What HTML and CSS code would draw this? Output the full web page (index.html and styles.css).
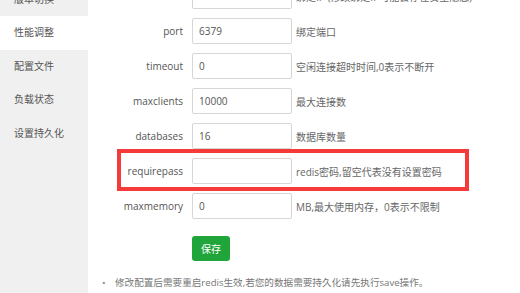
FILE: index.html
```html
<!DOCTYPE html>
<html>
<head>
    <meta charset="UTF-8">
    <title>Redis 性能调整</title>
    <link rel="stylesheet" href="styles.css">
</head>
<body>
    <div class="wrap">
        <div class="side">
            <div class="side-item">版本切换</div>
            <div class="side-item active">性能调整</div>
            <div class="side-item">配置文件</div>
            <div class="side-item">负载状态</div>
            <div class="side-item">设置持久化</div>
        </div>
        <div class="main">
            <div class="row">
                <span class="label">bind</span>
                <input class="inp" type="text" value="127.0.0.1">
                <span class="ps">绑定IP (修改绑定IP可能会存在安全隐患)</span>
            </div>
            <div class="row">
                <span class="label">port</span>
                <input class="inp" type="text" value="6379">
                <span class="ps">绑定端口</span>
            </div>
            <div class="row">
                <span class="label">timeout</span>
                <input class="inp" type="text" value="0">
                <span class="ps">空闲连接超时时间,0表示不断开</span>
            </div>
            <div class="row">
                <span class="label">maxclients</span>
                <input class="inp" type="text" value="10000">
                <span class="ps">最大连接数</span>
            </div>
            <div class="row">
                <span class="label">databases</span>
                <input class="inp" type="text" value="16">
                <span class="ps">数据库数量</span>
            </div>
            <div class="row mark">
                <span class="label">requirepass</span>
                <input class="inp" type="text" value="">
                <span class="ps">redis密码,留空代表没有设置密码</span>
                <div class="redbox"></div>
            </div>
            <div class="row">
                <span class="label">maxmemory</span>
                <input class="inp" type="text" value="0">
                <span class="ps">MB,最大使用内存，0表示不限制</span>
            </div>
            <div class="btn-row">
                <button class="btn-save">保存</button>
            </div>
            <ul class="tips">
                <li>修改配置后需要重启redis生效,若您的数据需要持久化请先执行save操作。</li>
            </ul>
        </div>
    </div>
</body>
</html>
```

FILE: styles.css
```css
body {
    margin: 0;
    background: #fff;
    font-family: "Open Sans", "Noto Sans CJK SC", sans-serif;
    font-size: 10px;
    color: #555;
    overflow: hidden;
}
.wrap {
    display: flex;
    margin-top: -17px;
    height: calc(100vh + 17px);
}
.side {
    width: 88px;
    flex-shrink: 0;
    background: #f0f0f0;
}
.side-item {
    height: 33.4px;
    line-height: 33.4px;
    padding-left: 14px;
    color: #555;
    font-size: 10px;
}
.side-item.active {
    background: #fff;
}
.main {
    padding-left: 10px;
    flex: 1;
}
.row {
    display: flex;
    align-items: center;
    height: 26px;
    margin-bottom: 9px;
}
.row.mark {
    position: relative;
}
.label {
    width: 85px;
    margin-right: 9px;
    text-align: right;
    color: #555;
}
.inp {
    width: 100px;
    height: 26px;
    box-sizing: border-box;
    border: 1px solid #d6d6d6;
    border-radius: 2px;
    padding: 0 6px;
    font-family: "Open Sans", "Noto Sans CJK SC", sans-serif;
    font-size: 10px;
    color: #555;
    outline: none;
}
.ps {
    margin-left: 4px;
    color: #666;
    white-space: nowrap;
}
.redbox {
    position: absolute;
    left: 19px;
    top: -9px;
    width: 352px;
    height: 42px;
    box-sizing: border-box;
    border: 4px solid #f53a3a;
}
.btn-row {
    padding-left: 94px;
    margin-top: 17px;
}
.btn-save {
    display: block;
    width: 38px;
    height: 25px;
    border: 0;
    border-radius: 3px;
    background: #20a53a;
    color: #fff;
    font-family: "Noto Sans CJK SC", sans-serif;
    font-size: 10px;
    padding: 0;
}
.tips {
    list-style: none;
    margin: 14px 0 0;
    padding: 0;
}
.tips li {
    line-height: 16px;
    font-size: 9.6px;
    color: #777;
    padding-left: 17px;
    position: relative;
}
.tips li::before {
    content: "•";
    position: absolute;
    left: 4px;
    top: 0;
    color: #888;
}
```
